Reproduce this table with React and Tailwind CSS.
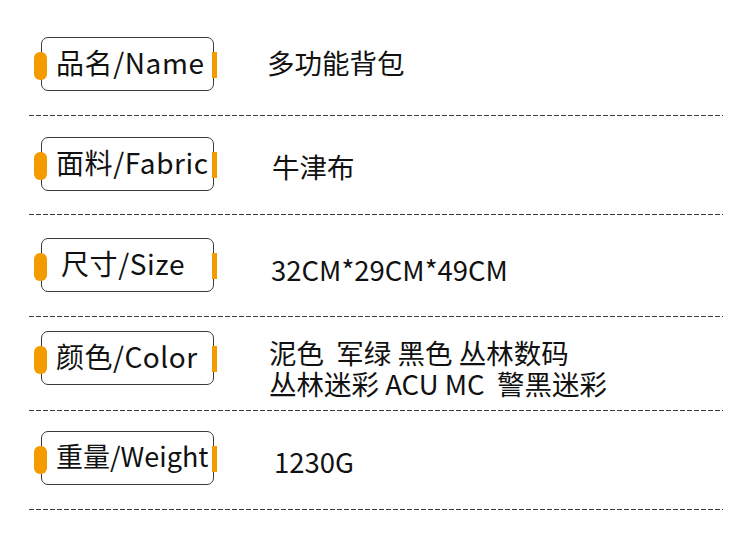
import React from 'react'

const rows = [
  { label: '品名/Name', lc: 'pl-[14px] text-[28px] tracking-[0.6px]', value: ['多功能背包'], pt: 'pt-[37px]', pb: 'pb-[24px]', vm: 'ml-[53px] mt-[10px]' },
  { label: '面料/Fabric', lc: 'pl-[14px] text-[28px] tracking-[0.6px]', value: ['牛津布'], pt: 'pt-[21px]', pb: 'pb-[23px]', vm: 'ml-[58px] mt-[14px]' },
  { label: '尺寸/Size', lc: 'pl-[19px] text-[28px] tracking-[0.6px]', value: ['32CM*29CM*49CM'], pt: 'pt-[23px]', pb: 'pb-[24px]', vm: 'ml-[57px] mt-[16px]' },
  {
    label: '颜色/Color',
    lc: 'pl-[14px] text-[28px] tracking-[0.5px]',
    value: ['泥色  军绿 黑色 丛林数码', '丛林迷彩 ACU MC  警黑迷彩'],
    pt: 'pt-[14px]',
    pb: 'pb-[25px]',
    vm: 'ml-[55px] mt-[6px]',
  },
  { label: '重量/Weight', lc: 'pl-[14px] text-[27px]', value: ['1230G'], pt: 'pt-[20px]', pb: 'pb-[24px]', vm: 'ml-[60px] mt-[15px]' },
]

function Label({ text, className }) {
  return (
    <div className="relative ml-[41px] flex h-[54px] w-[173px] shrink-0 items-center rounded-[7px] border border-[#3a3a3a] bg-white pb-[5px]">
      <span className="absolute left-[-8px] top-[14px] h-[28px] w-[13px] rounded-[6px] bg-[#f49b00]" />
      <span className="absolute right-[-4px] top-[14px] h-[26px] w-[5px] bg-[#f49b00]" />
      <span className={`${className} whitespace-nowrap leading-none text-[#111]`}>{text}</span>
    </div>
  )
}

function Divider() {
  return (
    <div className="ml-[29px] h-px w-[694px] bg-[linear-gradient(to_right,#3c3c3c_5px,transparent_5px)] bg-[length:7px_1px] bg-repeat-x" />
  )
}

export default function App() {
  return (
    <div
      className="h-[535px] w-[750px] overflow-hidden bg-white"
      style={{ fontFamily: '"Noto Sans CJK SC", "Noto Sans", sans-serif' }}
    >
      {rows.map((r) => (
        <div key={r.label}>
          <div className={`${r.pt} ${r.pb}`}>
            <div className="flex h-[54px]">
              <Label text={r.label} className={r.lc} />
              <div className={`${r.vm} text-[27.5px] leading-[31px] text-[#111]`}>
                {r.value.map((v) => (
                  <div key={v} className="whitespace-pre">
                    {v}
                  </div>
                ))}
              </div>
            </div>
          </div>
          <Divider />
        </div>
      ))}
    </div>
  )
}
